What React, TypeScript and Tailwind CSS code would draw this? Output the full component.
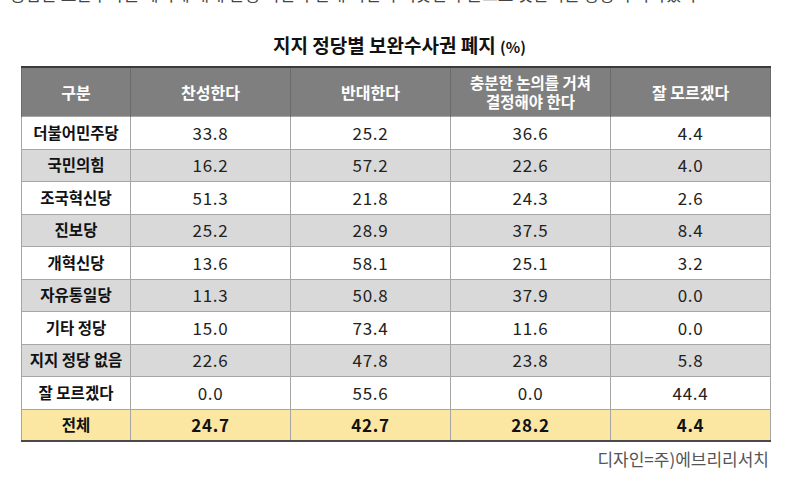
const rows: { name: string; v: string[]; shade: boolean }[] = [
  { name: "더불어민주당", v: ["33.8", "25.2", "36.6", "4.4"], shade: false },
  { name: "국민의힘", v: ["16.2", "57.2", "22.6", "4.0"], shade: true },
  { name: "조국혁신당", v: ["51.3", "21.8", "24.3", "2.6"], shade: false },
  { name: "진보당", v: ["25.2", "28.9", "37.5", "8.4"], shade: true },
  { name: "개혁신당", v: ["13.6", "58.1", "25.1", "3.2"], shade: false },
  { name: "자유통일당", v: ["11.3", "50.8", "37.9", "0.0"], shade: true },
  { name: "기타 정당", v: ["15.0", "73.4", "11.6", "0.0"], shade: false },
  { name: "지지 정당 없음", v: ["22.6", "47.8", "23.8", "5.8"], shade: true },
  { name: "잘 모르겠다", v: ["0.0", "55.6", "0.0", "44.4"], shade: false },
];

const total = ["24.7", "42.7", "28.2", "4.4"];

const font = { fontFamily: '"Noto Sans CJK KR", "Noto Sans", sans-serif' };

export default function App() {
  return (
    <div className="w-[799px] h-[478px] bg-white overflow-hidden" style={font}>
      {/* cut-off article line */}
      <div className="h-[6px] overflow-hidden">
        <p className="-mt-[16px] pl-[10px] text-[17px] leading-[20px] text-[#444] whitespace-nowrap">
          응답은 보완수사권 폐지에 대해 찬성 의견과 반대 의견이 비슷한 수준으로 엇갈리는 양상이 나타났다
        </p>
      </div>

      <h2 className="mt-[26px] text-center text-[19px] leading-[26px] font-bold text-[#111]">
        지지 정당별 보완수사권 폐지 <span className="text-[15px]">(%)</span>
      </h2>

      <table className="ml-[21px] mt-[6px] w-[749px] table-fixed border-collapse border-t-2 border-b-2 border-t-[#3c3c3c] border-b-[#4a4a4a] text-center">
        <colgroup>
          <col className="w-[109px]" />
          <col className="w-[160px]" />
          <col className="w-[160px]" />
          <col className="w-[160px]" />
          <col className="w-[160px]" />
        </colgroup>
        <thead>
          <tr className="h-[49px] bg-[#7f7f7f] text-white font-bold text-[16px]">
            <th className="border-x border-[#6b6b6b]">구분</th>
            <th className="border-x border-[#6b6b6b]">찬성한다</th>
            <th className="border-x border-[#6b6b6b]">반대한다</th>
            <th className="border-x border-[#6b6b6b] text-[15.5px] leading-[19px]">
              충분한 논의를 거쳐
              <br />
              결정해야 한다
            </th>
            <th className="border-x border-[#6b6b6b]">잘 모르겠다</th>
          </tr>
        </thead>
        <tbody className="text-[17px] tracking-[0.04em] text-[#222]">
          {rows.map((r, idx) => (
            <tr
              key={r.name}
              className={`${idx % 2 === 0 ? "h-[33px]" : "h-[32px]"} ${r.shade ? "bg-[#d9d9d9]" : "bg-white"}`}
            >
              <td className="border border-[#a6a6a6] font-bold text-[15.5px] tracking-normal text-[#111] whitespace-nowrap">
                {r.name}
              </td>
              {r.v.map((x, i) => (
                <td key={i} className="border border-[#a6a6a6]">
                  {x}
                </td>
              ))}
            </tr>
          ))}
          <tr className="h-[32px] bg-[#fbe6a2] font-bold text-[#111]">
            <td className="border border-[#a6a6a6] text-[15.5px] tracking-normal">전체</td>
            {total.map((x, i) => (
              <td key={i} className="border border-[#a6a6a6]">
                {x}
              </td>
            ))}
          </tr>
        </tbody>
      </table>

      <p className="mt-[5px] w-[769px] text-right text-[17px] leading-[24px] text-[#555]">디자인=주)에브리리서치</p>
    </div>
  );
}
